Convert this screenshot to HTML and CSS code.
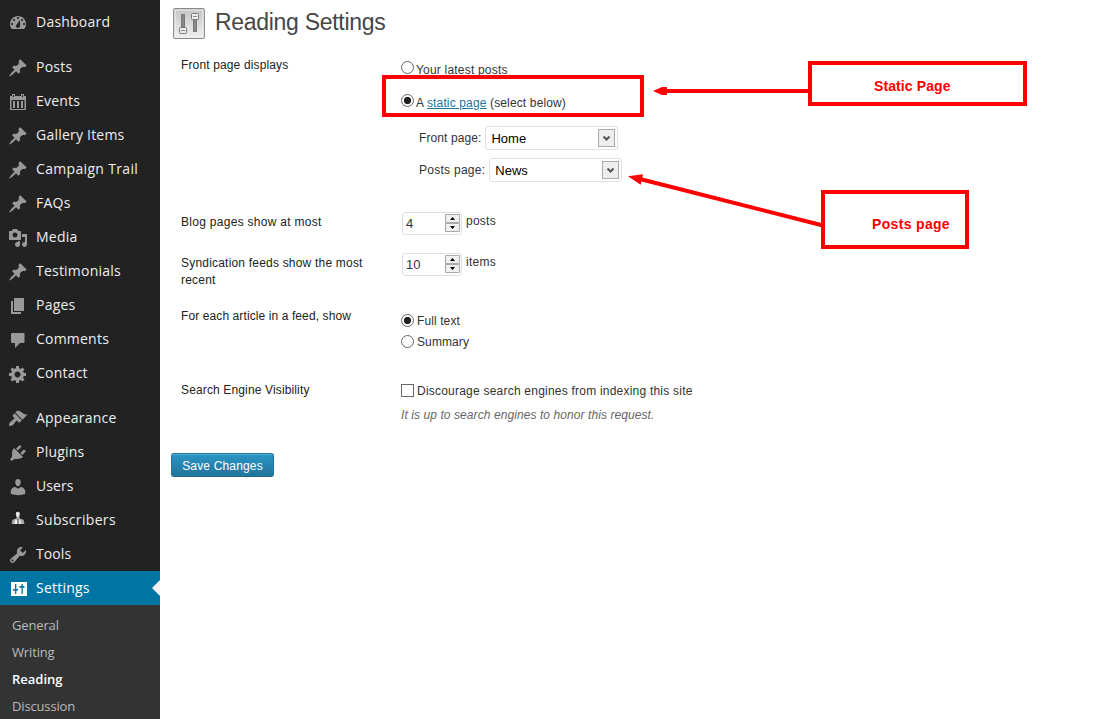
FILE: index.html
```html
<!DOCTYPE html>
<html lang="en">
<head>
<meta charset="utf-8">
<title>Reading Settings</title>
<link rel="stylesheet" href="styles.css">
</head>
<body>
<svg class="defs" width="0" height="0" aria-hidden="true">
  <symbol id="pin" viewBox="0 -1 20 20"><path d="M10.440 3.020l1.820-1.820 6.360 6.350-1.830 1.820c-1.050-.68-2.480-.57-3.410.36l-.75.75c-.92.93-1.040 2.350-.35 3.410l-1.830 1.820-2.410-2.410-2.800 2.790c-.42.42-3.380 2.710-3.800 2.290s1.860-3.390 2.280-3.810l2.790-2.790L4.100 9.360l1.830-1.820c1.050.69 2.480.57 3.400-.36l.75-.75c.93-.92 1.050-2.350.36-3.410z"/></symbol>
</svg>
<div class="layout">
  <nav class="sidebar">
    <a class="item item-first"><svg class="icon" viewBox="0 -1 20 20"><path fill-rule="evenodd" d="M3.760 16h12.480c1.100-1.370 1.760-3.110 1.760-5 0-4.420-3.580-8-8-8s-8 3.580-8 8c0 1.890.66 3.630 1.760 5zM10 4c.55 0 1 .45 1 1s-.45 1-1 1-1-.45-1-1 .45-1 1-1zM6 6c.55 0 1 .45 1 1s-.45 1-1 1-1-.45-1-1 .45-1 1-1zm8 0c.55 0 1 .45 1 1s-.45 1-1 1-1-.45-1-1 .45-1 1-1zm-5.370 5.550L12 7v6c0 1.100-.9 2-2 2s-2-.9-2-2c0-.57.24-1.080.63-1.450zM4 10c.55 0 1 .45 1 1s-.45 1-1 1-1-.45-1-1 .45-1 1-1zm12 0c.55 0 1 .45 1 1s-.45 1-1 1-1-.45-1-1 .45-1 1-1z"/></svg><span>Dashboard</span></a>
    <a class="item"><svg class="icon"><use href="#pin"/></svg><span>Posts</span></a>
    <a class="item"><svg class="icon" viewBox="0 0 20 20"><path fill-rule="evenodd" d="M2 5h2V3h3v2h6V3h3v2h2v14H2zm3-1v2h1V4zm9 0v2h1V4zM3.500 9v9h13V9z"/><path d="M5 10h2v7H5zm4 0h2v7H9zm4 0h2v7h-2z"/></svg><span>Events</span></a>
    <a class="item"><svg class="icon"><use href="#pin"/></svg><span>Gallery Items</span></a>
    <a class="item"><svg class="icon"><use href="#pin"/></svg><span class="wide">Campaign Trail</span></a>
    <a class="item"><svg class="icon"><use href="#pin"/></svg><span>FAQs</span></a>
    <a class="item"><svg class="icon" viewBox="0 -1 20 20"><path fill-rule="evenodd" d="M13 11V4c0-.55-.45-1-1-1h-1.670L9 1H5L3.670 3H2c-.55 0-1 .45-1 1v7c0 .55.45 1 1 1h10c.55 0 1-.45 1-1zM7 4.500c1.380 0 2.500 1.120 2.500 2.500S8.380 9.500 7 9.500 4.500 8.380 4.500 7 5.620 4.500 7 4.500zM14 6h5v10.500c0 1.380-1.120 2.500-2.500 2.500S14 17.880 14 16.500s1.120-2.500 2.500-2.500c.17 0 .34.020.5.050V9h-3V6zm-4 8.050V13h2v3.500c0 1.380-1.120 2.500-2.500 2.500S7 17.880 7 16.500 8.120 14 9.500 14c.17 0 .34.020.5.050z"/></svg><span>Media</span></a>
    <a class="item"><svg class="icon"><use href="#pin"/></svg><span>Testimonials</span></a>
    <a class="item"><svg class="icon" viewBox="0 0 20 20"><path d="M6 3h10v13H6zM3 6h2v11h8v2H3z"/></svg><span>Pages</span></a>
    <a class="item"><svg class="icon" viewBox="0 0 20 20"><path d="M4 4h11.500q1 0 1 1v8q0 1-1 1H12l-5 5v-5H4q-1 0-1-1V5q0-1 1-1z"/></svg><span>Comments</span></a>
    <a class="item"><svg class="icon" viewBox="0 -1 20 20"><path fill-rule="evenodd" d="M18 12h-2.180c-.17.7-.44 1.350-.81 1.930l1.540 1.540-2.100 2.100-1.540-1.540c-.58.36-1.230.63-1.910.79V19H8v-2.180c-.68-.16-1.330-.43-1.910-.79l-1.540 1.540-2.120-2.120 1.540-1.540c-.36-.58-.63-1.230-.79-1.910H1V9.030h2.170c.16-.7.44-1.350.8-1.940L2.430 5.550l2.100-2.100 1.540 1.540c.58-.37 1.240-.64 1.930-.81V2h3v2.180c.68.16 1.330.43 1.910.79l1.540-1.540 2.120 2.120-1.540 1.540c.36.59.64 1.240.8 1.940H18V12zm-8.500 1.500c1.660 0 3-1.340 3-3s-1.340-3-3-3-3 1.340-3 3 1.340 3 3 3z"/></svg><span>Contact</span></a>
    <a class="item item-group"><svg class="icon" viewBox="0 -0.600 20 20"><path d="M14.480 11.060L7.410 3.990l1.500-1.500c.5-.56 2.300-.47 3.510.32 1.210.8 1.430 1.280 2.910 2.100 1.180.64 2.450 1.260 4.450.85zm-.71.710L6.700 4.700 4.930 6.470c-.39.39-.39 1.020 0 1.410l1.060 1.060c.39.39.39 1.030 0 1.420-.6.6-1.430 1.110-2.210 1.690-.35.26-.7.53-1.010.84C1.430 14.230.4 16.080 1.400 17.070c.99 1 2.840-.03 4.180-1.360.31-.31.58-.66.85-1.020.57-.78 1.080-1.610 1.690-2.210.39-.39 1.020-.39 1.410 0l1.060 1.060c.39.39 1.020.39 1.410 0z"/></svg><span>Appearance</span></a>
    <a class="item"><svg class="icon" viewBox="0 -1 20 20"><path d="M13.110 4.360L9.870 7.600 8 5.730l3.240-3.240c.35-.34 1.050-.2 1.560.32.52.51.66 1.210.31 1.550zm-8 1.770l.91-1.120 9.010 9.010-1.190.84c-.71.71-2.630 1.160-3.820 1.160H6.140L4.900 17.260c-.59.59-1.540.59-2.120 0-.59-.58-.59-1.530 0-2.120l1.240-1.240v-3.880c0-1.130.4-3.190 1.090-3.890zm7.260 3.970l3.240-3.240c.34-.35 1.040-.21 1.550.31.52.51.66 1.210.31 1.550l-3.240 3.250z"/></svg><span>Plugins</span></a>
    <a class="item"><svg class="icon" viewBox="0 -1 20 20"><path d="M10 9.250c-2.270 0-2.730-3.440-2.730-3.440C7 4.020 7.820 2 9.970 2c2.160 0 2.980 2.020 2.710 3.810 0 0-.41 3.440-2.680 3.440zm0 2.570L12.720 10c2.390 0 4.520 2.330 4.520 4.530v2.490s-3.650 1.130-7.240 1.130c-3.650 0-7.240-1.130-7.240-1.130v-2.490c0-2.250 1.940-4.480 4.470-4.480z"/></svg><span class="tight">Users</span></a>
    <a class="item"><svg class="icon" viewBox="0 0 20 20"><path fill="#0c0c0c" d="M7 4c0-5 6-5 6 0v2H7z"/><path fill="#aaa" d="M10 1.500c3 0 2.500 3.500 1.500 5v2l4 1.300 1 4.200h-13l1-4.200 4-1.300v-2c-1-1.500-1.500-5 1.500-5z"/><path fill="#f4f4f4" d="M8.200 2.500h2.500V6L10 7.500 8.500 6zM7.500 9l2 1.500v3.500H6.300zM12 9l-1.300 1.500v3.500H13z"/><path fill="#555" d="M9.500 9h1v5h-1z"/></svg><span class="wide">Subscribers</span></a>
    <a class="item"><svg class="icon" viewBox="0 -1 20 20"><path fill-rule="evenodd" d="M16.680 9.770c-1.340 1.340-3.300 1.670-4.950.99l-5.410 6.520c-.99.99-2.590.99-3.580 0s-.99-2.590 0-3.570l6.520-5.420c-.68-1.650-.35-3.610.99-4.950 1.280-1.280 3.120-1.620 4.720-1.060l-2.890 2.890 2.820 2.820 2.860-2.870c.53 1.580.18 3.390-1.080 4.650zM3.810 16.210c.4.39 1.040.39 1.430 0 .4-.4.4-1.040 0-1.430-.39-.4-1.030-.4-1.430 0-.39.39-.39 1.030 0 1.430z"/></svg><span class="tight">Tools</span></a>
    <a class="item item-current"><svg class="icon" viewBox="0 0 20 20"><path fill="#fff" d="M3 4h16v14H3z"/><path fill="#0074a2" d="M7 6h1.300v5H10v1.700H8.300V16H7v-3.300H5V11h2zM13.500 6h1.300v2h1.700v1.700h-1.700V16h-1.300V9.700h-2V8h2z"/></svg><span>Settings</span></a>
    <div class="submenu">
      <a>General</a>
      <a>Writing</a>
      <a class="on">Reading</a>
      <a>Discussion</a>
    </div>
  </nav>
  <main class="content">
    <header class="heading">
      <svg width="32" height="32" viewBox="0 0 32 32">
        <defs><linearGradient id="plate" x1="0" y1="0" x2="0" y2="1"><stop offset="0" stop-color="#c4c4c4"/><stop offset="1" stop-color="#f0f0f0"/></linearGradient></defs>
        <rect x=".7" y=".7" width="30.600" height="29.800" rx="1.500" fill="url(#plate)" stroke="#888" stroke-width="1.200"/>
        <rect x="2" y="2" width="28" height="27.200" fill="none" stroke="#f2f2f2"/>
        <path d="M8.500 6.500h3v13h-3zM20.500 11.500h3v12h-3z" fill="#888" stroke="#777"/>
        <rect x="6.500" y="19.500" width="7" height="6" rx="1" fill="#eee" stroke="#777"/>
        <rect x="18.500" y="5.500" width="7" height="6" rx="1" fill="#eee" stroke="#777"/>
        <path d="M8 22.500h4M20 8.500h4" stroke="#888"/>
      </svg>
      <h1>Reading Settings</h1>
    </header>
    <form class="form">
      <div class="row row-front">
        <div class="label">Front page displays</div>
        <div class="field">
          <label class="choice latest"><i class="radio"></i><span>Your latest posts</span></label>
          <label class="choice static"><i class="radio checked"></i><span>A <a class="link">static page</a> (select below)</span></label>
          <div class="pick"><span>Front page:</span><div class="select"><span>Home</span><svg class="arrow" viewBox="0 0 15 16"><path d="M4.500 6.500l3 3 3-3"/></svg></div></div>
          <div class="pick pick-posts"><span>Posts page:</span><div class="select"><span>News</span><svg class="arrow" viewBox="0 0 15 16"><path d="M4.500 6.500l3 3 3-3"/></svg></div></div>
        </div>
      </div>
      <div class="row row-blog">
        <div class="label">Blog pages show at most</div>
        <div class="field count"><div class="number"><span>4</span><svg class="spin" viewBox="0 0 15 18"><path class="box" d="M.5.5h14v8H.5zM.5 9.500h14v8H.5z"/><path d="M5 6l2.500-3L10 6zM5 12l2.500 3 2.500-3z"/></svg></div><span>posts</span></div>
      </div>
      <div class="row row-feed">
        <div class="label">Syndication feeds show the most recent</div>
        <div class="field count"><div class="number"><span>10</span><svg class="spin" viewBox="0 0 15 18"><path class="box" d="M.5.5h14v8H.5zM.5 9.500h14v8H.5z"/><path d="M5 6l2.500-3L10 6zM5 12l2.500 3 2.500-3z"/></svg></div><span>items</span></div>
      </div>
      <div class="row row-article">
        <div class="label">For each article in a feed, show</div>
        <div class="field radios">
          <label class="choice"><i class="radio checked"></i><span>Full text</span></label>
          <label class="choice"><i class="radio"></i><span>Summary</span></label>
        </div>
      </div>
      <div class="row row-search">
        <div class="label">Search Engine Visibility</div>
        <div class="field">
          <label class="choice"><i class="check"></i><span class="discourage">Discourage search engines from indexing this site</span></label>
          <p class="note">It is up to search engines to honor this request.</p>
        </div>
      </div>
      <button class="save" type="button">Save Changes</button>
    </form>
  </main>
</div>
<div class="mark mark-option"></div>
<div class="mark mark-static">Static Page</div>
<div class="mark mark-posts">Posts page</div>
<svg class="arrows" width="1115" height="719" viewBox="0 0 1115 719">
  <path d="M810 91H664M823 225.500L640 179" stroke="#f00" stroke-width="4"/>
  <path d="M653 91l9-4h5v8h-5zM628 176.200l15-2-2.300 10.600z" fill="#f00"/>
</svg>
</body>
</html>
```
FILE: styles.css
```css
* { box-sizing: border-box; }
body {
  margin: 0;
  background: #fff;
  color: #333;
  font: 12px/17px "Liberation Sans", Arial, sans-serif;
}
.defs { position: absolute; }
.layout { display: flex; width: 1115px; height: 719px; overflow: hidden; }

.sidebar {
  width: 160px;
  flex: none;
  padding-top: 5px;
  background: #222;
  font-family: "Open Sans", sans-serif;
}
.item {
  display: flex;
  height: 34px;
  padding: 0 0 0 8px;
  gap: 8px;
  color: #eee;
  font-size: 14px;
  line-height: 34px;
  letter-spacing: .22px;
}
.item .wide { letter-spacing: .33px; }
.item .tight { letter-spacing: .1px; }
.item-first { margin-bottom: 11px; }
.item-group { margin-top: 11px; }
.icon { width: 20px; height: 20px; margin-top: 7px; flex: none; fill: #999; }
.item-current { position: relative; background: #0074a2; color: #fff; }
.item-current::after {
  content: "";
  position: absolute;
  right: 0;
  top: 9px;
  border: 8px solid transparent;
  border-right-color: #f1f1f1;
  border-left-width: 0;
}
.submenu {
  display: flex;
  flex-direction: column;
  height: 120px;
  padding: 7px 12px;
  background: #333;
  color: #bbb;
  font-size: 13px;
  line-height: 27px;
  letter-spacing: -.15px;
}
.submenu .on { color: #fff; font-weight: 600; letter-spacing: 0; }

.content { flex: 1; }
.heading { display: flex; height: 57px; padding: 8px 0 0 13px; gap: 10px; }
h1 { margin: 0; font-size: 23px; font-weight: 400; line-height: 28px; letter-spacing: -.3px; color: #464646; }

.row { display: grid; grid-template-columns: 200px 1fr; column-gap: 20px; padding-left: 21px; }
.label { color: #222; letter-spacing: .14px; }
.choice { display: flex; gap: 3px; align-items: flex-start; letter-spacing: .2px; }
.radio { width: 13px; height: 13px; border: 1px solid #666; border-radius: 50%; background: #fff; }
.checked { background: radial-gradient(circle, #222 0 3.300px, #fff 4px); }
.check { width: 13px; height: 13px; border: 1px solid #666; }
.link { color: #21759b; text-decoration: underline; }

.row-front { height: 157px; }
.latest { height: 33px; padding-top: 4px; gap: 2px; line-height: 19px; }
.static { height: 37px; padding-top: 4px; gap: 2px; line-height: 19px; letter-spacing: .14px; }
.pick { display: flex; height: 32px; margin-top: -1px; padding-left: 18px; gap: 4px; line-height: 24px; letter-spacing: .1px; }
.pick-posts { margin-top: 0; letter-spacing: .27px; }
.select {
  display: flex;
  justify-content: space-between;
  width: 133px;
  height: 24px;
  padding: 2px 2px 2px 5px;
  border: 1px solid #dfdfdf;
  border-radius: 3px;
  color: #000;
  font-size: 13px;
  line-height: 19px;
  letter-spacing: 0;
}
.arrow { width: 17px; height: 18px; border: 1px solid #aaa; background: #eee; fill: none; stroke: #555; stroke-width: 2; }

.row-blog { height: 41px; }
.row-blog .label { letter-spacing: .29px; }
.row-feed { height: 53px; }
.row-feed .label { padding-right: 10px; letter-spacing: .2px; }
.count { display: flex; gap: 4px; margin-top: -1px; letter-spacing: .25px; }
.number {
  display: flex;
  justify-content: space-between;
  width: 60px;
  height: 23px;
  margin: -1px 0 0 1px;
  padding: 1px 1px 0 3px;
  border: 1px solid #dfdfdf;
  border-radius: 3px;
  font-size: 13px;
  line-height: 20px;
  letter-spacing: 0;
}
.spin { width: 15px; height: 18px; }
.spin .box { fill: #f0f0f0; stroke: #aaa; }

.row-article { height: 74px; }
.row-article .label { letter-spacing: .1px; }
.radios { display: flex; flex-direction: column; gap: 4px; padding-top: 5px; }
.radios .choice { height: 17px; letter-spacing: .1px; }
.radios .radio { margin-top: 1px; }
.row-search { height: 71px; }
.row-search .choice { padding-top: 1px; }
.row-search .check { margin-top: 1px; }
.discourage { letter-spacing: .22px; }
.note { margin: 7px 0 0; color: #666; font-style: italic; letter-spacing: .08px; }
.save {
  display: block;
  width: 103px;
  height: 24px;
  margin-left: 11px;
  padding: 1px 0 0;
  border: 1px solid #21759b;
  border-bottom-color: #1e6a8d;
  border-radius: 3px;
  background: linear-gradient(#2a95c5, #21759b);
  box-shadow: inset 0 1px 0 rgba(120, 200, 230, .5);
  color: #fff;
  font: 12px/22px "Liberation Sans", Arial, sans-serif;
  letter-spacing: .16px;
}

.mark { position: absolute; border: 4px solid #f00; color: #f00; font-size: 14px; font-weight: 700; white-space: nowrap; }
.mark-option { left: 382px; top: 75px; width: 262px; height: 42px; }
.mark-static { left: 808px; top: 61px; width: 219px; height: 45px; padding: 13px 0 0 62px; letter-spacing: .1px; }
.mark-posts { left: 821px; top: 190px; width: 148px; height: 59px; padding: 22px 0 0 47px; letter-spacing: .33px; }
.arrows { position: absolute; left: 0; top: 0; pointer-events: none; }
```
